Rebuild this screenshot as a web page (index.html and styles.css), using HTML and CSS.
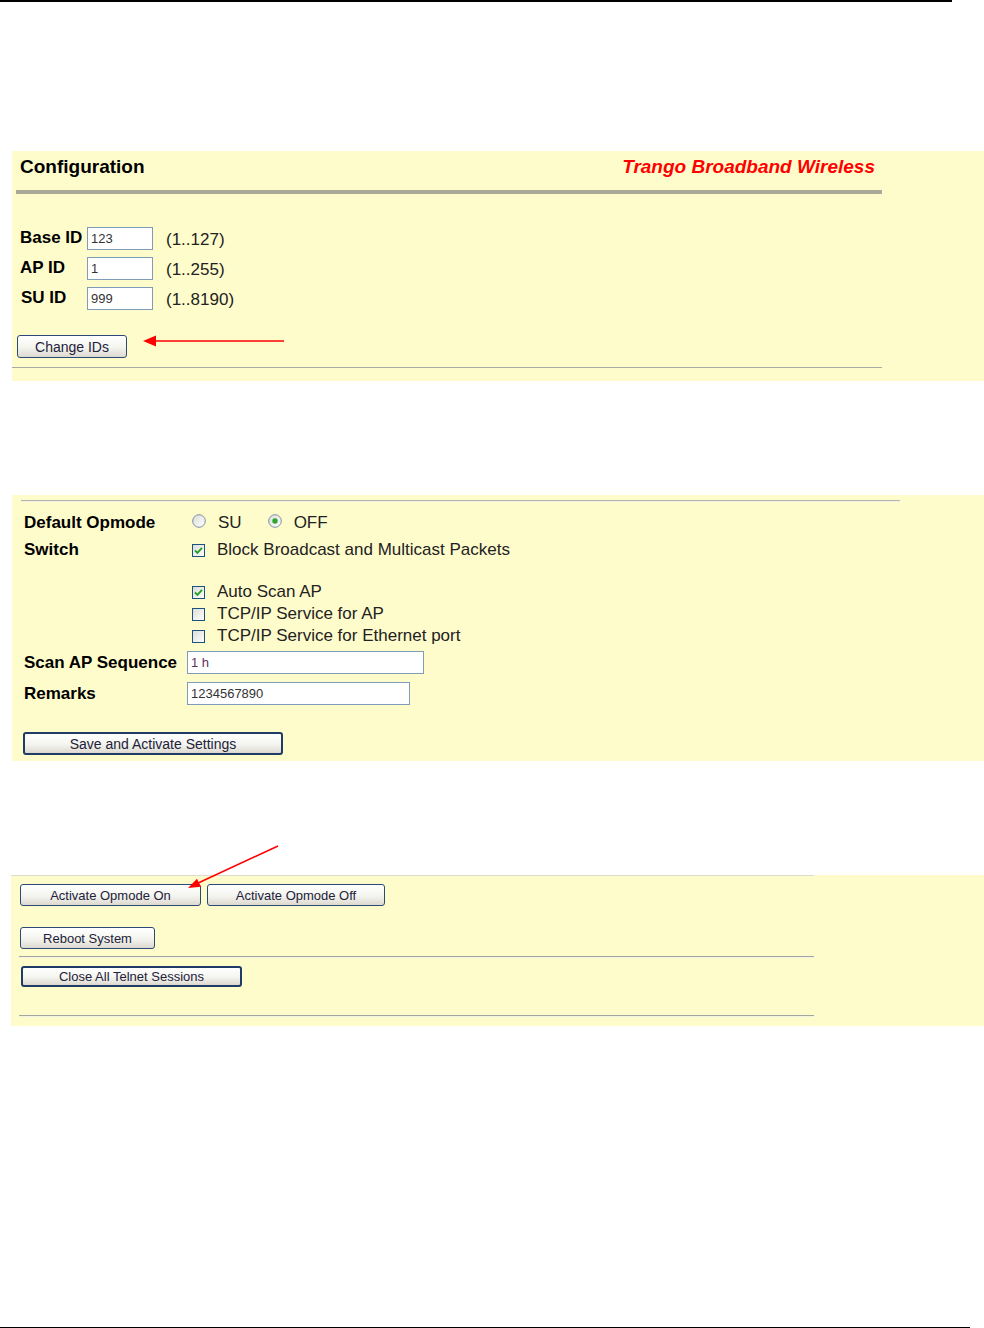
FILE: index.html
```html
<!DOCTYPE html>
<html lang="en">
  <head>
    <meta charset="UTF-8" />
    <title>Configuration</title>
    <link rel="stylesheet" href="styles.css">
  </head>
  <body>
    <!-- shared gradients for the check boxes and radios -->
    <svg class="defs" width="0" height="0" aria-hidden="true">
      <defs>
        <linearGradient id="boxFill" x1="0" y1="0" x2="1" y2="1">
          <stop offset="0" stop-color="#dcdcd6" />
          <stop offset="1" stop-color="#ffffff" />
        </linearGradient>
      </defs>
    </svg>

    <div class="page">
      <div class="page-rule top"></div>

      <div class="panel config">
        <div class="config-head">
          <h1>Configuration</h1>
          <span class="brand">Trango Broadband Wireless</span>
        </div>
        <div class="rule-thick"></div>

        <div class="id-rows">
          <div class="id-row">
            <label>Base ID</label>
            <input class="field" type="text" value="123">
            <span class="range">(1..127)</span>
          </div>
          <div class="id-row">
            <label>AP ID</label>
            <input class="field" type="text" value="1">
            <span class="range">(1..255)</span>
          </div>
          <div class="id-row">
            <label class="su">SU ID</label>
            <input class="field" type="text" value="999">
            <span class="range">(1..8190)</span>
          </div>
        </div>

        <div class="btn-row">
          <button class="btn change-btn">Change IDs</button>
          <svg class="arrow-left" width="142" height="12" viewBox="0 0 142 12">
            <line x1="10" y1="6" x2="141" y2="6" stroke="#f00" stroke-width="1.5" />
            <polygon points="0,6 13,0.5 13,11.5" fill="#f00" />
          </svg>
        </div>
        <div class="rule-thin"></div>
      </div>

      <div class="panel opmode">
        <div class="rule-light"></div>

        <div class="settings">
          <div class="set-row">
            <span class="set-label">Default Opmode</span>
            <div class="radios">
              <span class="opt">
                <svg class="radio" width="14" height="14" viewBox="0 0 14 14"><circle cx="7" cy="7" r="6.3" fill="url(#boxFill)" stroke="#7d8fa6" /></svg>
                SU
              </span>
              <span class="opt">
                <svg class="radio" width="14" height="14" viewBox="0 0 14 14"><circle cx="7" cy="7" r="6.3" fill="url(#boxFill)" stroke="#7d8fa6" /><circle cx="7" cy="7" r="2.7" fill="#2ea52e" /></svg>
                OFF
              </span>
            </div>
          </div>

          <div class="set-row switch-row">
            <span class="set-label">Switch</span>
            <div class="opts">
              <span class="opt">
                <svg class="check" width="13" height="13" viewBox="0 0 13 13"><rect x="0.5" y="0.5" width="12" height="12" fill="url(#boxFill)" stroke="#1c5180" /><path d="M3 6.4 L5.4 8.9 L10 3.9" fill="none" stroke="#21a121" stroke-width="1.8" /></svg>
                Block Broadcast and Multicast Packets
              </span>
              <span class="opt spaced">
                <svg class="check" width="13" height="13" viewBox="0 0 13 13"><rect x="0.5" y="0.5" width="12" height="12" fill="url(#boxFill)" stroke="#1c5180" /><path d="M3 6.4 L5.4 8.9 L10 3.9" fill="none" stroke="#21a121" stroke-width="1.8" /></svg>
                Auto Scan AP
              </span>
              <span class="opt">
                <svg class="check" width="13" height="13" viewBox="0 0 13 13"><rect x="0.5" y="0.5" width="12" height="12" fill="url(#boxFill)" stroke="#1c5180" /></svg>
                TCP/IP Service for AP
              </span>
              <span class="opt">
                <svg class="check" width="13" height="13" viewBox="0 0 13 13"><rect x="0.5" y="0.5" width="12" height="12" fill="url(#boxFill)" stroke="#1c5180" /></svg>
                TCP/IP Service for Ethernet port
              </span>
            </div>
          </div>

          <div class="set-row field-row">
            <span class="set-label">Scan AP Sequence</span>
            <input class="field seq-field" type="text" value="1 h">
          </div>
          <div class="set-row field-row remarks-row">
            <span class="set-label">Remarks</span>
            <input class="field remarks-field" type="text" value="1234567890">
          </div>

          <div class="save-row">
            <button class="btn focus save-btn">Save and Activate Settings</button>
          </div>
        </div>
      </div>

      <div class="panel actions">
        <svg class="arrow-diag" width="115" height="50" viewBox="0 0 115 50">
          <line x1="108" y1="3" x2="26" y2="41" stroke="#f00" stroke-width="1.5" />
          <polygon points="18,45 31,43.8 27,35.8" fill="#f00" />
        </svg>

        <div class="rule-top"></div>
        <div class="act-row">
          <button class="btn small on-btn">Activate Opmode On</button>
          <button class="btn small off-btn">Activate Opmode Off</button>
        </div>
        <div class="act-row reboot-row">
          <button class="btn small reboot-btn">Reboot System</button>
        </div>
        <div class="rule-mid"></div>
        <div class="act-row close-row">
          <button class="btn small focus close-btn">Close All Telnet Sessions</button>
        </div>
        <div class="rule-mid last"></div>
      </div>

      <div class="page-rule bottom"></div>
    </div>
  </body>
</html>
```

FILE: styles.css
```css
body {
  margin: 0;
  background-color: white;
  font-family: "Liberation Sans", Arial, sans-serif;
  color: #000;
}

.defs {
  position: absolute;
  width: 0;
  height: 0;
}

.page {
  display: flex;
  flex-direction: column;
  height: 1328px;
}

.page-rule.top {
  width: 952px;
  height: 2px;
  background-color: #000;
}

.page-rule.bottom {
  margin-top: auto;
  width: 970px;
  height: 1px;
  background-color: #000;
}

.panel {
  background-color: #fffccc;
  margin-left: 12px;
}

/* ---------- configuration panel ---------- */

.config {
  margin-top: 149px;
  padding: 5px 0 13px;
}

.config-head {
  display: flex;
  justify-content: space-between;
  align-items: baseline;
  width: 866px;
  margin-left: 4px;
  padding: 0 7px 0 4px;
  box-sizing: border-box;
  line-height: 22px;
}

.config-head h1 {
  margin: 0;
  font-size: 19px;
  font-weight: bold;
}

.brand {
  color: #f00;
  font-size: 19px;
  font-weight: bold;
  font-style: italic;
}

.rule-thick {
  margin: 12px 0 0 4px;
  width: 866px;
  height: 4px;
  background-color: #aaa99a;
}

.id-rows {
  display: flex;
  flex-direction: column;
  gap: 7px;
  margin-top: 32px;
  padding-left: 8px;
}

.id-row {
  display: grid;
  grid-template-columns: 67px 66px auto;
  align-items: center;
  height: 23px;
}

.id-row label {
  font-size: 17px;
  font-weight: bold;
  line-height: 20px;
  white-space: nowrap;
}

.id-row label.su {
  padding-left: 1px;
}

.range {
  margin-left: 13px;
  padding-top: 4px;
  font-size: 17px;
  line-height: 20px;
  color: #222;
}

.field {
  height: 23px;
  margin: 0;
  padding: 0 3px;
  box-sizing: border-box;
  border: 1px solid #7f9db9;
  background-color: white;
  font-family: "Liberation Sans", Arial, sans-serif;
  font-size: 13px;
  color: #333;
  outline: none;
}

.btn-row {
  display: flex;
  align-items: flex-start;
  margin-top: 26px;
  padding-left: 5px;
}

.btn {
  height: 23px;
  margin: 0;
  padding: 0;
  box-sizing: border-box;
  border: 1px solid #2b4a78;
  border-radius: 3px;
  background: linear-gradient(#ffffff, #f4f4ef 55%, #dcd9d0);
  font-family: "Liberation Sans", Arial, sans-serif;
  font-size: 14px;
  color: #22223a;
}

.btn.focus {
  border: 2px solid #1f3b68;
}

.change-btn {
  width: 110px;
}

.arrow-left {
  margin-left: 16px;
}

.rule-thin {
  margin-top: 9px;
  width: 870px;
  height: 1px;
  background-color: #a9a9a2;
}

/* ---------- opmode panel ---------- */

.opmode {
  margin-top: 114px;
  padding: 5px 0 6px;
}

.rule-light {
  margin-left: 9px;
  width: 879px;
  height: 0;
  border-top: 1px solid #b4b4ac;
  border-bottom: 1px solid #f0f0e4;
}

.settings {
  margin-top: 11px;
  padding-left: 12px;
}

.set-row {
  display: flex;
  align-items: center;
  font-size: 17px;
  line-height: 20px;
}

.set-label {
  width: 163px;
  flex-shrink: 0;
  font-weight: bold;
}

.radios {
  display: flex;
  gap: 26px;
}

.opt {
  display: flex;
  align-items: center;
  gap: 12px;
  height: 20px;
  color: #222;
}

.radio,
.check {
  margin-left: 5px;
}

.radio {
  margin-bottom: 4px;
}

.radios .opt + .opt .radio {
  margin-left: 0;
}

.switch-row {
  align-items: flex-start;
  margin-top: 7px;
}

.opts {
  display: flex;
  flex-direction: column;
  gap: 2px;
}

.opt.spaced {
  margin-top: 20px;
}

.field-row {
  margin-top: 5px;
}

.remarks-row {
  margin-top: 8px;
}

.seq-field {
  width: 237px;
  color: #603060;
}

.remarks-field {
  width: 223px;
}

.save-row {
  margin-top: 27px;
}

.save-btn {
  width: 260px;
  margin-left: -1px;
}

/* ---------- actions panel ---------- */

.actions {
  position: relative;
  margin-top: 114px;
  margin-left: 11px;
  padding-bottom: 9px;
}

.arrow-diag {
  position: absolute;
  left: 159px;
  top: -32px;
}

.rule-top {
  width: 803px;
  height: 1px;
  background-color: #dcdcd2;
}

.act-row {
  display: flex;
  gap: 6px;
  margin-top: 8px;
  padding-left: 9px;
}

.btn.small {
  height: 22px;
  font-size: 13px;
}

.on-btn {
  width: 181px;
}

.off-btn {
  width: 178px;
}

.reboot-row {
  margin-top: 21px;
}

.reboot-btn {
  width: 135px;
}

.rule-mid {
  margin: 7px 0 0 8px;
  width: 795px;
  height: 0;
  border-top: 1px solid #a4a4a0;
  border-bottom: 1px solid #f2f2e6;
}

.rule-mid.last {
  margin-top: 28px;
}

.close-row {
  padding-left: 10px;
}

.btn.close-btn {
  width: 221px;
  height: 21px;
}
```
